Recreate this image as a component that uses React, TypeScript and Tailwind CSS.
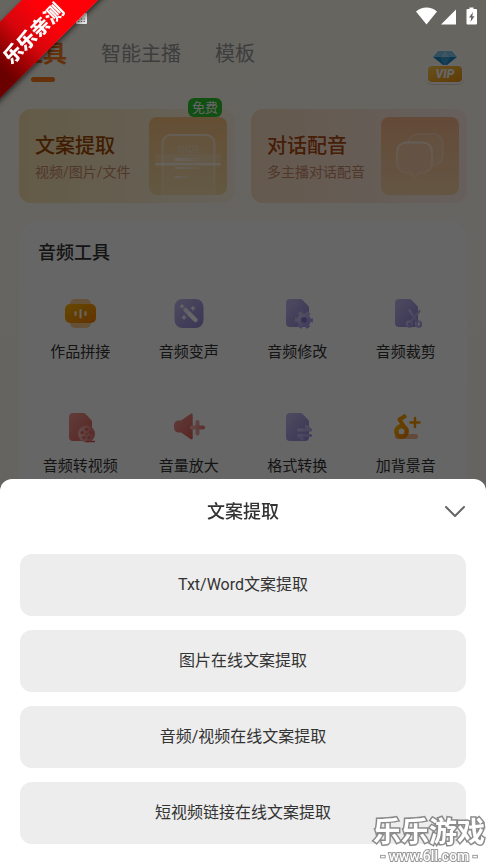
import { useState } from 'react';
import type { ReactNode } from 'react';

const tabs = ['工具', '智能主播', '模板'];

const sheetOptions = [
  'Txt/Word文案提取',
  '图片在线文案提取',
  '音频/视频在线文案提取',
  '短视频链接在线文案提取',
];

// Shared gradients for the tool icons
function IconDefs() {
  return (
    <svg className="absolute w-0 h-0" aria-hidden="true">
      <defs>
        <linearGradient id="purple" x1="0" y1="0" x2="1" y2="1">
          <stop offset="0" stopColor="#c3bcf0" />
          <stop offset="1" stopColor="#9186d4" />
        </linearGradient>
        <linearGradient id="purpleLight" x1="0" y1="0" x2="1" y2="1">
          <stop offset="0" stopColor="#d2ccf5" />
          <stop offset="1" stopColor="#a094ea" />
        </linearGradient>
        <linearGradient id="red" x1="0" y1="0" x2="1" y2="1">
          <stop offset="0" stopColor="#f09a92" />
          <stop offset="1" stopColor="#dd5e59" />
        </linearGradient>
        <linearGradient id="redLight" x1="0" y1="0" x2="1" y2="0">
          <stop offset="0" stopColor="#f6bdb8" />
          <stop offset="1" stopColor="#e2706c" />
        </linearGradient>
        <linearGradient id="orange" x1="0" y1="0" x2="1" y2="1">
          <stop offset="0" stopColor="#ffb400" />
          <stop offset="1" stopColor="#f58000" />
        </linearGradient>
        <linearGradient id="scanLine" x1="0" y1="0" x2="1" y2="0">
          <stop offset="0" stopColor="#fff" stopOpacity="0.7" />
          <stop offset="1" stopColor="#fff" stopOpacity="0.1" />
        </linearGradient>
        <linearGradient id="fade" x1="0" y1="0" x2="0" y2="1">
          <stop offset="0" stopColor="#fff" stopOpacity="0.6" />
          <stop offset="1" stopColor="#fff" stopOpacity="0.15" />
        </linearGradient>
      </defs>
    </svg>
  );
}

function ToolIcon({ children }: { children: ReactNode }) {
  return (
    <svg viewBox="0 0 32 32" className="w-8 h-8" aria-hidden="true">
      {children}
    </svg>
  );
}

const FILE_PATH = 'M9 2h10.500a3 3 0 0 1 2.100.900l5.500 5.800a3 3 0 0 1 .900 2.100V26a4 4 0 0 1-4 4H9a4 4 0 0 1-4-4V6a4 4 0 0 1 4-4z';

const tools = [
  {
    name: '作品拼接',
    icon: (
      <ToolIcon>
        <rect x="6" y="2" width="21" height="29" rx="5" fill="#fccb8d" />
        <rect x="1" y="7" width="31" height="19" rx="5" fill="url(#orange)" />
        <path d="M11.500 15v3M16.500 13v7.500M21.500 15v3" stroke="#fff" strokeWidth="2" strokeLinecap="round" />
      </ToolIcon>
    ),
  },
  {
    name: '音频变声',
    icon: (
      <ToolIcon>
        <rect x="1.500" y="2" width="29" height="29" rx="8" fill="url(#purple)" />
        <path d="M12.500 13l2 2" stroke="#f0eeff" strokeWidth="4.500" strokeLinecap="round" />
        <path d="M16.500 17l6 6" stroke="#fff" strokeWidth="4.500" strokeLinecap="round" />
        <path d="M9 7l.600 1.700 1.700.600-1.700.600L9 11.600l-.600-1.700-1.700-.600 1.700-.600zM20 9l.600 1.700 1.700.600-1.700.600-.600 1.700-.600-1.700-1.700-.600 1.700-.600zM11 18l.600 1.800 1.800.600-1.800.600-.600 1.800-.600-1.800-1.800-.600 1.800-.600z" fill="#fff" stroke="#fff" strokeWidth="0.500" />
      </ToolIcon>
    ),
  },
  {
    name: '音频修改',
    icon: (
      <ToolIcon>
        <path d={FILE_PATH} fill="url(#purple)" />
        <circle cx="23" cy="23" r="4.800" fill="none" stroke="url(#purpleLight)" strokeWidth="4" />
        <circle cx="23" cy="23" r="7.300" fill="none" stroke="url(#purpleLight)" strokeWidth="3.400" strokeDasharray="4 3.640" strokeDashoffset="2" />
        <circle cx="23" cy="23" r="2.800" fill="#8579cf" />
      </ToolIcon>
    ),
  },
  {
    name: '音频裁剪',
    icon: (
      <ToolIcon>
        <path d={FILE_PATH} fill="url(#purple)" />
        <g fill="none" stroke="url(#purpleLight)" strokeWidth="2.200" strokeLinecap="round">
          <circle cx="19.500" cy="27" r="2.600" />
          <circle cx="28.500" cy="27" r="2.600" />
          <path d="M21 24.500L29.500 14M27 24.500L19.500 13.500" />
        </g>
      </ToolIcon>
    ),
  },
  {
    name: '音频转视频',
    icon: (
      <ToolIcon>
        <path d={FILE_PATH} fill="url(#red)" />
        <circle cx="22.500" cy="23" r="8.500" fill="url(#redLight)" />
        <path d="M22 30.500h9" stroke="#dd5651" strokeWidth="1.500" />
        <g fill="#dd6a64">
          <circle cx="22.500" cy="18.500" r="1.700" />
          <circle cx="26.700" cy="21.600" r="1.700" />
          <circle cx="25.100" cy="26.600" r="1.700" />
          <circle cx="19.900" cy="26.600" r="1.700" />
          <circle cx="18.200" cy="21.600" r="1.700" />
          <circle cx="22.500" cy="23" r="1" />
        </g>
      </ToolIcon>
    ),
  },
  {
    name: '音量放大',
    icon: (
      <ToolIcon>
        <path d="M5.500 9.500H8L17.500 3c1.200-.800 2.200-.300 2.200 1v23c0 1.300-1 1.800-2.200 1L8 21.500H5.500A4.500 4.500 0 0 1 1 17v-3a4.500 4.500 0 0 1 4.500-4.500z" fill="url(#red)" />
        <path d="M24.500 11v11.500" stroke="#f2a29e" strokeWidth="4" strokeLinecap="round" />
        <path d="M19 14.500H30a2 2 0 0 1 0 4H19a2 2 0 0 1 0-4z" fill="url(#redLight)" />
      </ToolIcon>
    ),
  },
  {
    name: '格式转换',
    icon: (
      <ToolIcon>
        <path d={FILE_PATH} fill="url(#purple)" />
        <path d="M17.500 19H29.500l-4-3.500M29.500 24.500H17.500l4.500 4" fill="none" stroke="url(#purpleLight)" strokeWidth="3.200" strokeLinecap="round" strokeLinejoin="round" />
      </ToolIcon>
    ),
  },
  {
    name: '加背景音',
    icon: (
      <ToolIcon>
        <rect x="5" y="23" width="23" height="5" rx="2" fill="#f8b98c" />
        <circle cx="11.500" cy="20.500" r="5.200" fill="none" stroke="url(#orange)" strokeWidth="4.400" />
        <path d="M16 4.500L9.500 8.500l4.500 7" fill="none" stroke="#f99e00" strokeWidth="4" strokeLinejoin="round" />
        <path d="M25 7v9M20.500 11.500h9" stroke="#f79a00" strokeWidth="2.500" strokeLinecap="round" />
      </ToolIcon>
    ),
  },
];

function StatusBar() {
  return (
    <div className="relative z-20 flex items-center justify-between h-8 pl-[76px] pr-[9px]">
      <svg viewBox="0 0 11 11" className="w-[11px] h-[11px] mt-1" aria-hidden="true">
        <rect width="11" height="11" rx="1" fill="#e8e8e8" />
        <path d="M2 6h7M2 8.500h7" stroke="#676560" strokeWidth="1.200" strokeDasharray="1.400 1.400" />
      </svg>
      <svg viewBox="0 0 62 18" className="w-[62px] h-[18px]" fill="#fff" aria-hidden="true">
        <path d="M1 4.500C7-.700 16-.700 22 4.500L11.500 17.500z" />
        <path d="M26 17.500h15V2.500z" />
        <path d="M54.500.500h4V2H61a1 1 0 0 1 1 1v13.500a1 1 0 0 1-1 1h-8.500a1 1 0 0 1-1-1V3a1 1 0 0 1 1-1h2z" />
        <path d="M58 5l-4 5.500h2.200L55.500 15l4-5.800h-2.200z" fill="#676560" />
      </svg>
    </div>
  );
}

function VipBadge() {
  return (
    <button className="mt-4" aria-label="VIP">
      <svg viewBox="0 0 40 38" className="w-10 h-[38px]">
        <defs>
          <linearGradient id="gold" x1="0" y1="0" x2="1" y2="1">
            <stop offset="0" stopColor="#ffcb4a" />
            <stop offset="1" stopColor="#ee930f" />
          </linearGradient>
        </defs>
        <path d="M13 3h14l5 6-12 11L8 9z" fill="#fff" stroke="#fff" strokeWidth="4" strokeLinejoin="round" />
        <rect x="1" y="17" width="38" height="20" rx="6" fill="#e5d8cc" />
        <rect x="1" y="16" width="38" height="20" rx="6" fill="#fff" />
        <path d="M13 3h14l5 6H8z" fill="#7fc8ea" />
        <path d="M16 9l4-6 4 6z" fill="#a3d9f0" />
        <path d="M8 9h24L22 17h-4z" fill="#2189c6" />
        <path d="M15 9h10l-4 8h-2z" fill="#3a9fd8" />
        <rect x="3" y="18" width="34" height="16" rx="4" fill="url(#gold)" />
        <text x="20" y="30" textAnchor="middle" fontSize="12" fontWeight="900" fontStyle="italic" fill="#fff" fontFamily="Roboto, sans-serif">VIP</text>
      </svg>
    </button>
  );
}

function ScanArt() {
  return (
    <svg viewBox="0 0 78 78" className="w-[78px] h-[78px] rounded-lg bg-linear-to-b from-[#fbc483] to-[#f6dca4]" aria-hidden="true">
      <path d="M13.500 78V26a8 8 0 0 1 8-8h36a8 8 0 0 1 8 8v52" fill="#fff" fillOpacity="0.12" stroke="url(#fade)" strokeWidth="2" />
      <text x="39" y="36" textAnchor="middle" fontSize="11" fontWeight="700" fill="#fff" fillOpacity="0.25" fontFamily="Roboto, sans-serif">OCR</text>
      <rect x="6" y="37" width="66" height="10" fill="#fff" fillOpacity="0.15" />
      <rect x="6" y="46" width="66" height="2.500" rx="1" fill="#fff" fillOpacity="0.65" />
      <rect x="26" y="41" width="27" height="3" rx="1" fill="url(#scanLine)" />
      <rect x="26" y="50" width="27" height="2" rx="1" fill="url(#scanLine)" />
      <rect x="26" y="59" width="15" height="2" rx="1" fill="url(#scanLine)" />
    </svg>
  );
}

function ChatArt() {
  return (
    <svg viewBox="0 0 78 78" className="w-[78px] h-[78px] rounded-lg bg-linear-to-b from-[#fbb98d] to-[#f9d6a8]" aria-hidden="true">
      <path d="M37 17h15a10 10 0 0 1 10 10v11a10 10 0 0 1-10 10H37a10 10 0 0 1-10-10V27a10 10 0 0 1 10-10z" fill="#fff" fillOpacity="0.1" stroke="#fff" strokeOpacity="0.3" strokeWidth="1.500" />
      <path d="M25 25.500h17a9 9 0 0 1 9 9v12a9 9 0 0 1-9 9h-3l-5 5-5-5h-4a9 9 0 0 1-9-9v-12a9 9 0 0 1 9-9z" fill="#fbd0ae" fillOpacity="0.75" stroke="url(#fade)" strokeWidth="2" />
    </svg>
  );
}

function Ribbon() {
  return (
    <div className="absolute top-0 left-0 z-30 w-28 h-28 overflow-hidden pointer-events-none">
      <div className="absolute -left-[50px] top-[3px] flex items-center justify-center w-40 h-[54px] pt-[10px] -rotate-45 bg-linear-to-r from-[#6a0000] from-20% via-[#d6060c] via-45% to-[#ff0008] to-65% shadow-[0_2px_5px_rgba(0,0,0,0.6)]">
        <span className="text-[19px] leading-[19px] font-black text-white whitespace-nowrap">乐乐亲测</span>
      </div>
    </div>
  );
}

function Watermark() {
  return (
    <div className="fixed bottom-0 right-0 z-30 flex flex-col items-center pr-px text-white pointer-events-none [paint-order:stroke_fill]">
      <span className="text-[28px] leading-[30px] font-bold [-webkit-text-stroke:3px_#8a8a8a]">乐乐游戏</span>
      <span className="text-sm leading-4 font-medium [-webkit-text-stroke:2px_#999]">- www.6ll.com -</span>
    </div>
  );
}

export default function App() {
  const [activeTab, setActiveTab] = useState('工具');
  const [sheetOpen, setSheetOpen] = useState(true);

  return (
    <div className="relative min-h-screen overflow-hidden bg-linear-to-b from-[#fffcf1] to-[#fffaf3] font-[Roboto,'Noto_Sans_CJK_SC',sans-serif]">
      <IconDefs />
      <StatusBar />
      <Ribbon />

      <header className="flex items-start justify-between h-[77px] pl-[19px] pr-[21px]">
        <nav className="flex items-start gap-[34px]">
          {tabs.map((tab) => (
            <button
              key={tab}
              onClick={() => setActiveTab(tab)}
              className={`flex flex-col items-center gap-[5px] pt-1 ${tab === activeTab ? 'text-2xl font-bold text-[#f97a1c]' : 'text-xl text-[#999]'}`}
            >
              <span className="leading-9">{tab}</span>
              {tab === activeTab && <span className="w-6 h-[5px] rounded-full bg-[#f97a1c]" />}
            </button>
          ))}
        </nav>
        <VipBadge />
      </header>

      <main className="px-[19px]">
        {/* Feature cards */}
        <div className="grid grid-cols-2 gap-4">
          <button className="relative flex items-center justify-between h-[94px] pl-4 pr-2 text-left rounded-xl bg-linear-to-r from-[#fae2b0] to-[#fff6e4]">
            <span className="flex flex-col pt-[3px]">
              <span className="text-xl leading-7 font-medium text-[#a04a00]">文案提取</span>
              <span className="text-sm leading-6 text-[#c98a6c]">视频/图片/文件</span>
            </span>
            <ScanArt />
            <span className="absolute -top-[11px] right-[13px] px-1 rounded-md bg-[#2bc52f] text-[13px] leading-[19px] text-white">免费</span>
          </button>
          <button className="flex items-center justify-between h-[94px] pl-4 pr-2 text-left rounded-xl bg-linear-to-r from-[#fddfc2] to-[#feeee8]">
            <span className="flex flex-col pt-[3px]">
              <span className="text-xl leading-7 font-medium text-[#b04a10]">对话配音</span>
              <span className="text-sm leading-6 text-[#c98a6c]">多主播对话配音</span>
            </span>
            <ChatArt />
          </button>
        </div>

        {/* Audio tools */}
        <section className="mt-[18px] px-[7px] pt-[18px] pb-8 rounded-[20px] bg-white">
          <h2 className="pl-3 text-lg leading-7 font-medium text-[#333]">音频工具</h2>
          <div className="grid grid-cols-4 gap-y-12 mt-[30px]">
            {tools.map((tool) => (
              <button key={tool.name} className="flex flex-col items-center gap-3">
                {tool.icon}
                <span className="text-[15px] leading-[22px] text-[#333]">{tool.name}</span>
              </button>
            ))}
          </div>
        </section>
      </main>

      {sheetOpen && (
        <>
          <div className="fixed inset-0 z-10 bg-black/60" onClick={() => setSheetOpen(false)} />
          <div role="dialog" aria-label="文案提取" className="fixed bottom-0 inset-x-0 z-20 px-5 pb-5 rounded-t-xl bg-white">
            <div className="relative flex items-center justify-center h-[65px]">
              <h2 className="text-lg leading-7 font-medium text-[#333]">文案提取</h2>
              <button onClick={() => setSheetOpen(false)} aria-label="关闭" className="absolute right-0 p-1 -mr-[3px]">
                <svg viewBox="0 0 20 12" className="w-5 h-3" fill="none" stroke="#666" strokeWidth="2" strokeLinecap="round" strokeLinejoin="round">
                  <path d="M1 1l9 9 9-9" />
                </svg>
              </button>
            </div>
            <div className="flex flex-col gap-[14px] pt-[10px]">
              {sheetOptions.map((option) => (
                <button key={option} className="h-[62px] rounded-xl bg-[#ededed] text-base text-[#333]">
                  {option}
                </button>
              ))}
            </div>
          </div>
        </>
      )}

      <Watermark />
    </div>
  );
}
